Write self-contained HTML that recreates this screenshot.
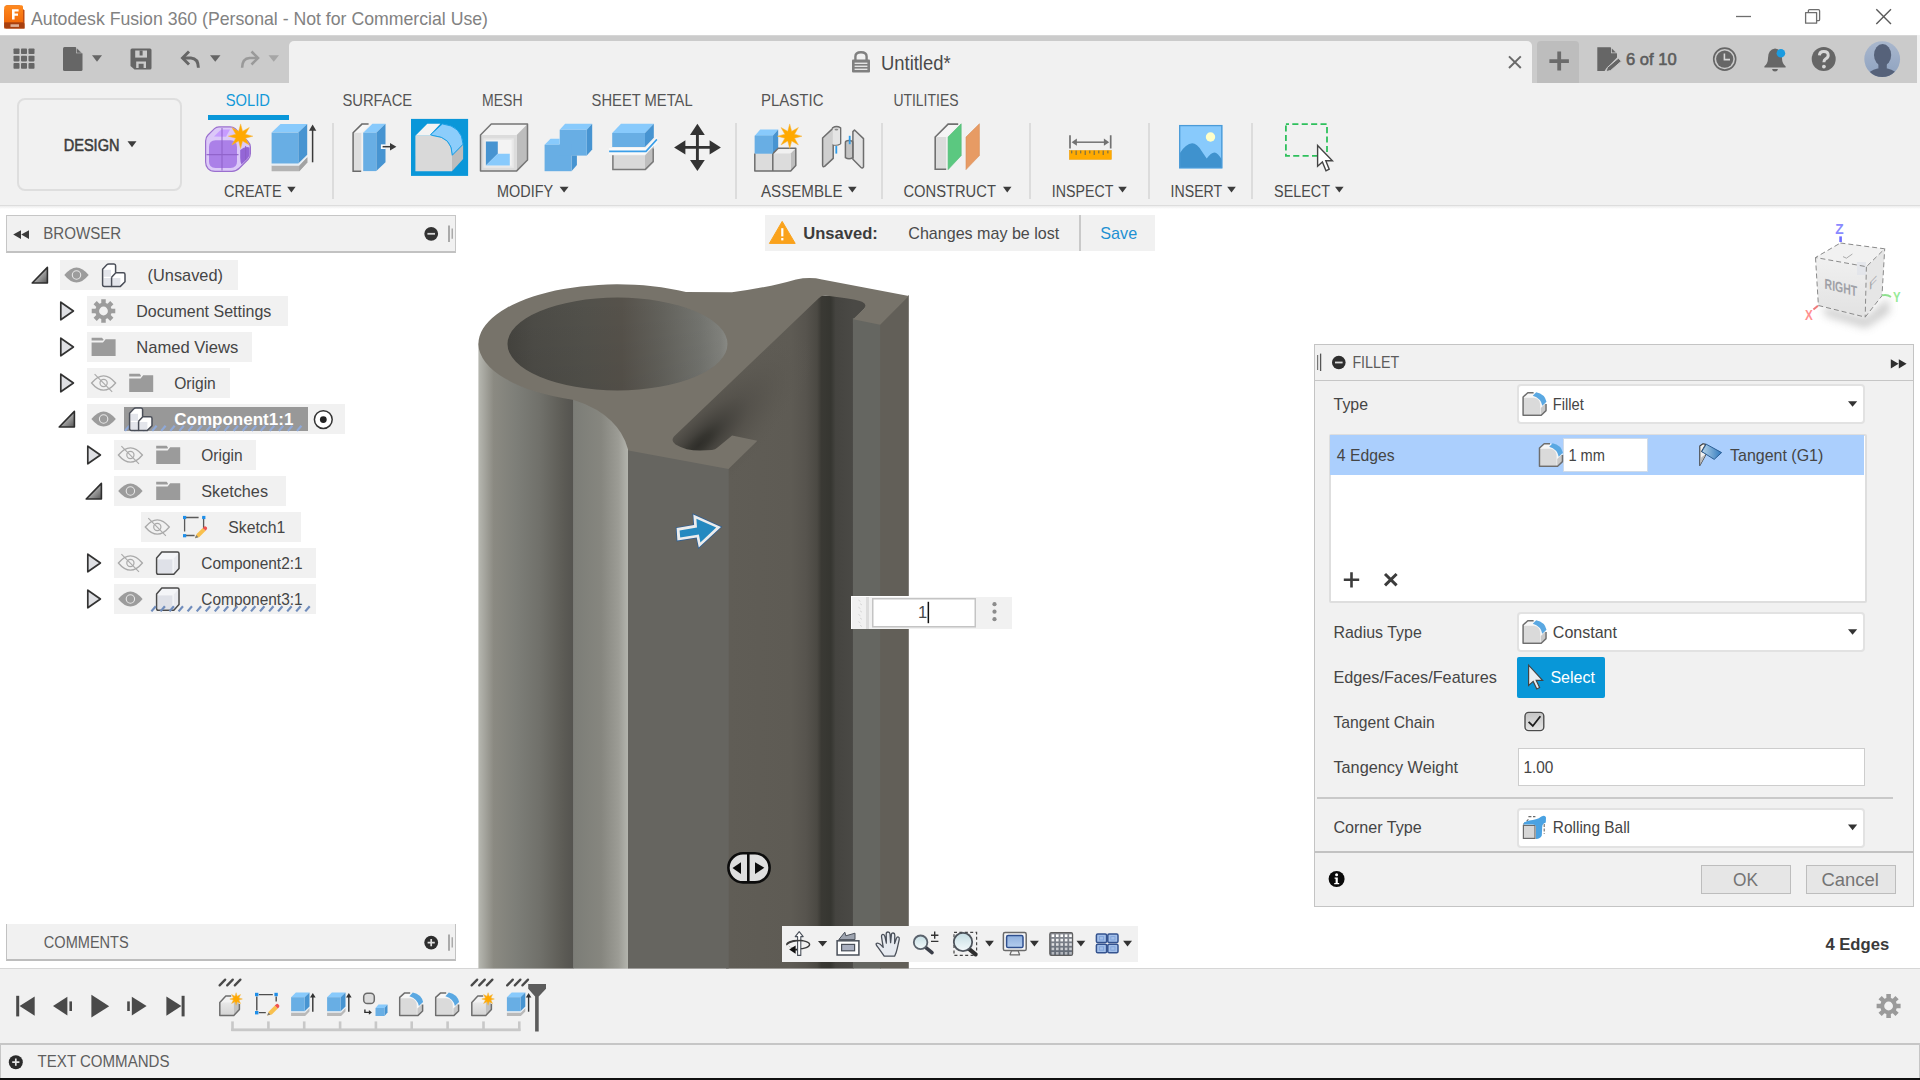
<!DOCTYPE html>
<html lang="en">
<head>
<meta charset="utf-8">
<title>Autodesk Fusion 360 (Personal - Not for Commercial Use)</title>
<style>
html,body{margin:0;padding:0;width:1920px;height:1080px;overflow:hidden;background:#fff;}
body{position:relative;font-family:"Liberation Sans", sans-serif;}
.b{position:absolute;box-sizing:border-box;}
svg.ov{position:absolute;left:0;top:0;width:1920px;height:1080px;overflow:hidden;}
svg.ov text{font-family:"Liberation Sans", sans-serif;white-space:pre;}
</style>
</head>
<body>
<div class="b" style="left:0;top:35px;width:1917px;height:48px;background:#cbcbcb"></div><div class="b" style="left:1917px;top:35px;width:3px;height:48px;background:#f1f1f1"></div><div class="b" style="left:0;top:35px;width:1917px;height:1px;background:#d6d6d6"></div><div class="b" style="left:0;top:83px;width:1920px;height:123px;background:#f1f1f1"></div><div class="b" style="left:289px;top:41px;width:1243px;height:43px;background:#f1f1f1;border-radius:5px 5px 0 0"></div><div class="b" style="left:1537px;top:41px;width:42px;height:42px;background:#bdbdbd;border-radius:4px 4px 0 0"></div><div class="b" style="left:0;top:205px;width:1920px;height:1px;background:#dddddd"></div><div class="b" style="left:0;top:206px;width:1920px;height:3px;background:linear-gradient(#ececec,#ffffff)"></div><div class="b" style="left:17px;top:98px;width:165px;height:93px;border:2px solid #dedede;border-radius:8px;background:#f1f1f1"></div><div class="b" style="left:207.5px;top:115.4px;width:81.5px;height:4.2px;background:#0a97d9"></div><div class="b" style="left:332.0px;top:122.5px;width:2px;height:76px;background:#dcdcdc"></div><div class="b" style="left:735.4px;top:122.5px;width:2px;height:76px;background:#dcdcdc"></div><div class="b" style="left:881.0px;top:122.5px;width:2px;height:76px;background:#dcdcdc"></div><div class="b" style="left:1029.4px;top:122.5px;width:2px;height:76px;background:#dcdcdc"></div><div class="b" style="left:1147.8px;top:122.5px;width:2px;height:76px;background:#dcdcdc"></div><div class="b" style="left:1251.4px;top:122.5px;width:2px;height:76px;background:#dcdcdc"></div><div class="b" style="left:6px;top:215px;width:450px;height:38px;background:#f1f1f1;border:1px solid #c6c6c6;border-bottom:2px solid #c2c2c2"></div><div class="b" style="left:60px;top:260px;width:178px;height:30px;background:#f1f1f1"></div><div class="b" style="left:87px;top:296px;width:201px;height:30px;background:#f1f1f1"></div><div class="b" style="left:87px;top:332px;width:165px;height:30px;background:#f1f1f1"></div><div class="b" style="left:87px;top:368px;width:142.5px;height:30px;background:#f1f1f1"></div><div class="b" style="left:87px;top:404px;width:258px;height:30px;background:#f1f1f1"></div><div class="b" style="left:124.4px;top:407.2px;width:183.2px;height:23.8px;background:#989898"></div><div class="b" style="left:114px;top:440px;width:142.39999999999998px;height:30px;background:#f1f1f1"></div><div class="b" style="left:114px;top:476px;width:172.39999999999998px;height:30px;background:#f1f1f1"></div><div class="b" style="left:141px;top:512px;width:160.39999999999998px;height:30px;background:#f1f1f1"></div><div class="b" style="left:114px;top:548px;width:202.39999999999998px;height:30px;background:#f1f1f1"></div><div class="b" style="left:114px;top:584px;width:202.39999999999998px;height:30px;background:#f1f1f1"></div><div class="b" style="left:6px;top:924px;width:450px;height:37px;background:#f1f1f1;border:1px solid #c2c2c2;border-top:none;border-bottom:2px solid #bdbdbd"></div><div class="b" style="left:765px;top:215px;width:390px;height:36px;background:#f1f1f1"></div><div class="b" style="left:1079.2px;top:215px;width:2px;height:36px;background:#c9c9c9"></div><div class="b" style="left:1314px;top:344px;width:600px;height:563px;background:#f1f1f1;border:1px solid #c4c4c4"></div><div class="b" style="left:1315px;top:379.6px;width:598px;height:1.4px;background:#c6c6c6"></div><div class="b" style="left:1517px;top:384px;width:348px;height:40.39999999999998px;background:#fff;border:2px solid #e2e2e2;border-radius:4px"></div><div class="b" style="left:1328.6px;top:433.6px;width:538px;height:169px;background:#fff;border:2px solid #dedede;border-radius:2px"></div><div class="b" style="left:1330px;top:434.6px;width:1533.6px;height:40px;background:#abcffd;width:533.6px"></div><div class="b" style="left:1563.4px;top:438px;width:84.6px;height:34px;background:#fff;border:1px solid #d0dbe8"></div><div class="b" style="left:1517px;top:612.4px;width:348px;height:39.60000000000002px;background:#fff;border:2px solid #e2e2e2;border-radius:4px"></div><div class="b" style="left:1517px;top:657px;width:87.6px;height:40.6px;background:#0897d8;border-radius:2px"></div><div class="b" style="left:1518px;top:748px;width:346.6px;height:38.4px;background:#fff;border:1.5px solid #cdcdcd"></div><div class="b" style="left:1317px;top:797.4px;width:576px;height:1.4px;background:#c9c9c9"></div><div class="b" style="left:1517px;top:807.6px;width:348px;height:40.0px;background:#fff;border:2px solid #e2e2e2;border-radius:4px"></div><div class="b" style="left:1315px;top:851.4px;width:598px;height:1.4px;background:#c2c2c2"></div><div class="b" style="left:1701px;top:865px;width:90px;height:28.6px;background:#e6e6e6;border:1.4px solid #bdbdbd"></div><div class="b" style="left:1806px;top:865px;width:90px;height:28.6px;background:#e6e6e6;border:1.4px solid #bdbdbd"></div><div class="b" style="left:0;top:968.4px;width:1920px;height:112px;background:#f1f1f1;border-top:1.6px solid #d6d6d6"></div><div class="b" style="left:0;top:1043px;width:1920px;height:1.6px;background:#c6c6c6"></div><div class="b" style="left:0;top:1044px;width:1.4px;height:34px;background:#c6c6c6"></div><div class="b" style="left:1918.6px;top:1044px;width:1.4px;height:34px;background:#c6c6c6"></div><div class="b" style="left:0;top:1077.6px;width:1920px;height:2.4px;background:#111"></div>
<svg class="ov" width="1920" height="1080" viewBox="0 0 1920 1080">
<defs><linearGradient id="flogo" x1="0" y1="0" x2="0" y2="1"><stop offset="0" stop-color="#ff8a1f"/><stop offset="1" stop-color="#f26a0a"/></linearGradient></defs>
<path d="M6.5 5.2H19.5L24.5 10.5V28.6H4.2V10.2Z" fill="#c14c10"/>
<path d="M6.8 5.2H21.5Q23 5.2 23 6.8V22.5H4.2V7.8Q4.2 5.2 6.8 5.2Z" fill="url(#flogo)"/>
<path d="M4.2 22.5H23L24.5 23.5V28.6H5.8L4.2 27Z" fill="#a8400f"/>
<path d="M12 9.2H18.6V11.4H14.6V13.6H18V15.8H14.6V19.6H12Z" fill="#fff"/>
<rect x="10.5" y="24.3" width="8.5" height="2.6" fill="#e8c3ae" opacity=".85"/>
<text x="31.0" y="25.0" font-size="18.6" fill="#828282" textLength="457.0" lengthAdjust="spacingAndGlyphs">Autodesk Fusion 360 (Personal - Not for Commercial Use)</text>
<path d="M1736 16.5H1751" stroke="#6e6e6e" stroke-width="1.3" fill="none"/>
<path d="M1805.6 12.6H1816.6V23.2H1805.6Z" stroke="#6e6e6e" stroke-width="1.3" fill="none" stroke-linejoin="round"/>
<path d="M1808.4 12.6V10.6Q1808.4 9.6 1809.6 9.6H1818.4Q1819.6 9.6 1819.6 10.8V19.4Q1819.6 20.6 1818.4 20.6H1816.6" stroke="#6e6e6e" stroke-width="1.3" fill="none"/>
<path d="M1876.3 9.3L1891 24M1891 9.3L1876.3 24" stroke="#5a5a5a" stroke-width="1.4" fill="none"/>
<rect x="13.5" y="48.5" width="6" height="5.6" rx="0.8" fill="#666666"/>
<rect x="13.5" y="55.8" width="6" height="5.6" rx="0.8" fill="#666666"/>
<rect x="13.5" y="63.1" width="6" height="5.6" rx="0.8" fill="#666666"/>
<rect x="21.0" y="48.5" width="6" height="5.6" rx="0.8" fill="#666666"/>
<rect x="21.0" y="55.8" width="6" height="5.6" rx="0.8" fill="#666666"/>
<rect x="21.0" y="63.1" width="6" height="5.6" rx="0.8" fill="#666666"/>
<rect x="28.5" y="48.5" width="6" height="5.6" rx="0.8" fill="#666666"/>
<rect x="28.5" y="55.8" width="6" height="5.6" rx="0.8" fill="#666666"/>
<rect x="28.5" y="63.1" width="6" height="5.6" rx="0.8" fill="#666666"/>
<path d="M64.5 47H75.5L82.5 53.5V69.5Q82.5 71 81 71H64.5Q63 71 63 69.5V48.5Q63 47 64.5 47Z" fill="#666666"/>
<path d="M76 47V53.3H82.5Z" fill="#cbcbcb"/><path d="M76.6 48.2L81.3 52.7H76.6Z" fill="#666"/>
<path d="M92 55.2H102L97.0 61.8Z" fill="#666666"/>
<path d="M132 48.5H150Q151.5 48.5 151.5 50V68Q151.5 69.5 150 69.5H134.5L130.5 66V50Q130.5 48.5 132 48.5Z" fill="#666666"/>
<path d="M135.2 50.5H147V57.6H135.2Z" fill="#cbcbcb"/><rect x="139.6" y="50.5" width="3" height="5" fill="#666"/>
<path d="M136.2 68V61.6H146V68H143.6V63.8H138.6V68Z" fill="#cbcbcb"/>
<path d="M189 51.5L182.5 58L189 64.5" stroke="#666666" stroke-width="2.9" fill="none" stroke-linejoin="miter"/>
<path d="M183.5 58H191Q198.2 58.4 198.4 67.8" stroke="#666666" stroke-width="2.9" fill="none"/>
<path d="M210 55.2H220.5L215.25 61.8Z" fill="#666666"/>
<path d="M251.5 51.5L258 58L251.5 64.5" stroke="#9a9a9a" stroke-width="2.6" fill="none"/>
<path d="M257 58H249.5Q242.3 58.4 242.1 67.8" stroke="#9a9a9a" stroke-width="2.6" fill="none"/>
<path d="M268.5 55.2H279L273.75 61.8Z" fill="#a6a6a6"/>
<path d="M855.4 60V56.6Q855.4 52.3 861 52.3Q866.6 52.3 866.6 56.6V60" stroke="#808080" stroke-width="2.4" fill="none"/>
<rect x="852" y="59.6" width="18" height="13" rx="1" fill="#808080"/>
<rect x="854.6" y="62.6" width="12.8" height="1.4" fill="#e4e4e4"/>
<rect x="854.6" y="65.6" width="12.8" height="1.4" fill="#e4e4e4"/>
<rect x="854.6" y="68.6" width="12.8" height="1.4" fill="#e4e4e4"/>
<text x="881.0" y="69.7" font-size="19.5" fill="#4a4a4a" textLength="69.6" lengthAdjust="spacingAndGlyphs">Untitled*</text>
<path d="M1509 56.4L1520.8 68M1520.8 56.4L1509 68" stroke="#6a6a6a" stroke-width="2" fill="none"/>
<path d="M1549.4 61.1H1568.9M1559.2 51.6V70.6" stroke="#6b6b6b" stroke-width="3.8" fill="none"/>
<path d="M1597.3 47.2H1610.5L1617 53.6V57.6L1606 68.8L1604.6 71H1597.3Z" fill="#666666"/>
<path d="M1611 47.2V53.2H1617Z" fill="#cbcbcb"/><path d="M1611.8 48.6L1615.8 52.6H1611.8Z" fill="#666"/>
<path d="M1618.4 58.2L1621.4 61.2L1610.6 70.6L1606 71.6L1607.4 67.4Z" fill="#666666" stroke="#cbcbcb" stroke-width="1"/>
<text x="1626.0" y="64.9" font-size="16.8" fill="#5c5c5c" textLength="50.6" lengthAdjust="spacingAndGlyphs" stroke="#5c5c5c" stroke-width="0.6">6 of 10</text>
<circle cx="1724.7" cy="59.1" r="11" fill="none" stroke="#666666" stroke-width="1.6"/>
<circle cx="1724.7" cy="59.1" r="8.6" fill="#666666"/>
<path d="M1724.4 53.4V59.6H1730" stroke="#d6d6d6" stroke-width="1.6" fill="none"/>
<path d="M1775 48.5Q1782 49.5 1782 58Q1782 63.5 1785.6 66.2V67.4H1764.4V66.2Q1768 63.5 1768 58Q1768 49.5 1775 48.5Z" fill="#666666"/>
<path d="M1772 69H1778Q1777.6 71.6 1775 71.6Q1772.4 71.6 1772 69Z" fill="#666666"/>
<circle cx="1780.9" cy="53.2" r="4.3" fill="#1a9be0"/>
<circle cx="1823.7" cy="59.1" r="12" fill="#666666"/>
<path d="M1819.4 55.4Q1819.6 51.4 1823.8 51.4Q1828.2 51.4 1828.2 55.2Q1828.2 57.4 1825.8 58.8Q1823.9 60 1823.9 62.2" stroke="#d8d8d8" stroke-width="3" fill="none"/>
<circle cx="1823.9" cy="66.6" r="1.9" fill="#d8d8d8"/>
<defs><linearGradient id="avbg" x1="0" y1="0" x2="0" y2="1"><stop offset="0" stop-color="#a9b7cd"/><stop offset="1" stop-color="#8ea2c0"/></linearGradient><clipPath id="avc"><circle cx="1882.2" cy="59.1" r="17.9"/></clipPath></defs>
<circle cx="1882.2" cy="59.1" r="17.9" fill="url(#avbg)"/>
<g clip-path="url(#avc)"><ellipse cx="1882.6" cy="55" rx="8.6" ry="11" fill="#56627a"/><path d="M1878.4 62H1886.8V70H1878.4Z" fill="#56627a"/><path d="M1866 80Q1867 70.5 1877.5 68.5H1887.5Q1898 70.5 1899 80Z" fill="#56627a"/></g><text x="63.7" y="150.5" font-size="17" fill="#3c3c3c" textLength="55.8" lengthAdjust="spacingAndGlyphs" stroke="#3c3c3c" stroke-width="0.55">DESIGN</text>
<path d="M127.5 141.2H136.5L132.0 147.2Z" fill="#3c3c3c"/>
<text x="225.8" y="105.8" font-size="17" fill="#1399d8" textLength="44.2" lengthAdjust="spacingAndGlyphs">SOLID</text>
<text x="342.4" y="105.8" font-size="17" fill="#555555" textLength="69.8" lengthAdjust="spacingAndGlyphs">SURFACE</text>
<text x="482.0" y="105.8" font-size="17" fill="#555555" textLength="40.6" lengthAdjust="spacingAndGlyphs">MESH</text>
<text x="591.6" y="105.8" font-size="17" fill="#555555" textLength="101.0" lengthAdjust="spacingAndGlyphs">SHEET METAL</text>
<text x="761.0" y="105.8" font-size="17" fill="#555555" textLength="62.5" lengthAdjust="spacingAndGlyphs">PLASTIC</text>
<text x="893.4" y="105.8" font-size="17" fill="#555555" textLength="65.1" lengthAdjust="spacingAndGlyphs">UTILITIES</text>
<text x="224.0" y="197.0" font-size="16.8" fill="#4a4a4a" textLength="57.6" lengthAdjust="spacingAndGlyphs">CREATE</text>
<path d="M287.2 186.8H295.6L291.4 192.6Z" fill="#3c3c3c"/>
<text x="497.0" y="197.0" font-size="16.8" fill="#4a4a4a" textLength="56.1" lengthAdjust="spacingAndGlyphs">MODIFY</text>
<path d="M559.6 186.8H568.6L564.1 192.6Z" fill="#3c3c3c"/>
<text x="761.0" y="197.0" font-size="16.8" fill="#4a4a4a" textLength="81.5" lengthAdjust="spacingAndGlyphs">ASSEMBLE</text>
<path d="M848 186.8H856.6L852.3 192.6Z" fill="#3c3c3c"/>
<text x="903.4" y="197.0" font-size="16.8" fill="#4a4a4a" textLength="92.5" lengthAdjust="spacingAndGlyphs">CONSTRUCT</text>
<path d="M1003 186.8H1011.5L1007.25 192.6Z" fill="#3c3c3c"/>
<text x="1051.8" y="197.0" font-size="16.8" fill="#4a4a4a" textLength="61.5" lengthAdjust="spacingAndGlyphs">INSPECT</text>
<path d="M1118.2 186.8H1126.8L1122.5 192.6Z" fill="#3c3c3c"/>
<text x="1170.6" y="197.0" font-size="16.8" fill="#4a4a4a" textLength="51.6" lengthAdjust="spacingAndGlyphs">INSERT</text>
<path d="M1227.2 186.8H1235.8L1231.5 192.6Z" fill="#3c3c3c"/>
<text x="1274.1" y="197.0" font-size="16.8" fill="#4a4a4a" textLength="55.9" lengthAdjust="spacingAndGlyphs">SELECT</text>
<path d="M1335 186.8H1343.6L1339.3 192.6Z" fill="#3c3c3c"/>
<path d="M205.6 141Q205.6 137.5 208 135L214.5 128.6Q216.3 126.9 219 126.9H230Q233 126.9 235 128.5L247.5 141Q250.4 144 250.4 147V153.5Q250.4 157 248 159.5L239.5 168Q236.4 171.3 232 171.3H215Q210.5 171.3 208 168.6Q205.6 166 205.6 162Z" fill="#dcc9f8" stroke="#9a6fce" stroke-width="1.2"/><path d="M209 147Q209 140.2 215.5 140.2H230.5Q237 140.2 237 147V161.5Q237 168 230.5 168H215.5Q209 168 209 161.5Z" fill="#ab80e8"/><path d="M214 136.5L219.5 131Q221 129.6 223 129.6H230L226 136.8Z" fill="#c79cff"/><path d="M240.2 150Q245 146 249.6 147.5V154Q249.6 156.5 247.6 158.6L241.5 164.6Q240.2 162 240.2 158Z" fill="#9466d6"/><path d="M222 128V170.6M206.5 154.6H238.5M245.6 146V160" stroke="#8c5fc6" stroke-width="1.1" fill="none" opacity=".85"/><path d="M240.6 123.9L242.6 131.3L249.3 127.5L245.5 134.2L252.9 136.2L245.5 138.2L249.3 144.9L242.6 141.1L240.6 148.5L238.6 141.1L231.9 144.9L235.7 138.2L228.3 136.2L235.7 134.2L231.9 127.5L238.6 131.3Z" fill="#ffa900" stroke="#f5b84a" stroke-width="0.5"/><path d="M271.6 165.6L299.4 165.6L307.3 157.2L307.3 162.6L299.4 171.2L271.6 171.2Z" fill="#b3b3b3"/><path d="M299.2 165.6L307.3 157.2L307.3 162.6L299.2 171.2Z" fill="#a2a2a2"/><path d="M271.6 163.4L298.4 163.4L307.2 154.8L307.2 157.0L299.2 165.6L271.6 165.6Z" fill="#e6eef5"/><path d="M271.6 132.6L280.5 123.9L307.2 123.9L298.3 132.6Z" fill="#88cafc"/><path d="M298.3 132.6L307.2 123.9L307.2 154.8L298.3 163.5Z" fill="#4794d1"/><path d="M271.6 132.6L298.3 132.6L298.3 163.5L271.6 163.5Z" fill="#68aee4"/><path d="M312.6 127V162.3" stroke="#3a3a3a" stroke-width="1.5"/><path d="M309 130.8L312.6 124.4L316.3 130.8Z" fill="#3a3a3a"/><path d="M353.1 132.8L361.9 124.1L370.0 124.1L361.3 132.8Z" fill="#f6f6f6"/><path d="M353.1 132.8L361.3 132.8L361.3 171.2L353.1 171.2Z" fill="#dedede"/><path d="M368.6 124.1H361.9L353.1 132.8V171.2H361.2" stroke="#6a6a6a" stroke-width="1.5" fill="none"/><path d="M363.2 132.7L372.4 123.8L385.5 123.8L376.3 132.7Z" fill="#88cafc"/><path d="M376.3 132.7L385.5 123.8L385.5 162.2L376.3 171.1Z" fill="#4794d1"/><path d="M363.2 132.7L376.3 132.7L376.3 171.1L363.2 171.1Z" fill="#68aee4"/><rect x="380.9" y="144.4" width="4.9" height="4.6" fill="#fafafa"/><path d="M382.6 146.7H391" stroke="#3a3a3a" stroke-width="1.5"/><path d="M390 143L396.4 146.7L390 150.5Z" fill="#3a3a3a"/><rect x="411" y="118.9" width="57.1" height="57" fill="#0a97d9"/><path d="M415.4 135.7L427.3 123.8L440.4 123.8L430.2 134.8L433.0 135.7Z" fill="#f3f3f3"/><path d="M415.4 135.7H433Q452 137 452 155.6V171.2H415.4Z" fill="#d9d9d9"/><path d="M452.0 155.6L463.1 144.6L463.1 159.0L452.0 171.2Z" fill="#bdbdbd"/><path d="M430.6 134.6L442.4 123.9Q462 126 463.1 144.2L452.3 155.2Q452 137 433 135.6Z" fill="#8ccdfb" stroke="#1a9fe6" stroke-width="1"/><path d="M480.5 135.0L491.3 123.9L527.5 123.9L516.7 135.0Z" fill="#f3f3f3"/><path d="M516.7 135.0L527.5 123.9L527.5 160.0L516.7 170.9Z" fill="#bdbdbd"/><path d="M480.5 135.0L516.7 135.0L516.7 170.9L480.5 170.9Z" fill="#dcdcdc"/><rect x="483.4" y="138.4" width="30.4" height="29.4" fill="#e9e9e9"/><rect x="485.8" y="140" width="25.8" height="25.6" fill="#f3f3f3"/><path d="M485.9 141.6L497.8 141.6L497.8 153.8L485.9 165.4Z" fill="#4794d1"/><path d="M485.9 165.4L497.8 153.8L509.8 153.8L509.8 165.4Z" fill="#88cafc"/><path d="M480.5 135L491.3 123.9H527.5V160L516.7 170.9H480.5Z" fill="none" stroke="#767676" stroke-width="1.5" stroke-linejoin="round"/><path d="M559.7 129.8L565.1 123.8L592.2 123.8L586.8 129.8Z" fill="#88cafc"/><path d="M586.8 129.8L592.2 123.8L592.2 149.6L586.8 155.6Z" fill="#4794d1"/><path d="M559.7 129.8L586.8 129.8L586.8 155.6L559.7 155.6Z" fill="#68aee4"/><path d="M544.6 144.7L550.5 138.7L559.7 138.7L559.7 144.7Z" fill="#88cafc"/><path d="M571.5 155.6L576.9 155.6L576.9 165.1L571.5 171.2Z" fill="#4794d1"/><path d="M544.6 144.7L571.5 144.7L571.5 171.2L544.6 171.2Z" fill="#68aee4"/><path d="M559.7 144.0L571.6 144.0L571.6 155.6L559.7 155.6Z" fill="#68aee4"/><path d="M612.2 133.1L621.0 123.8L653.8 123.8L645.0 133.1Z" fill="#88cafc"/><path d="M645.0 133.1L653.8 123.8L653.8 137.7L645.0 147.0Z" fill="#4794d1"/><path d="M612.2 133.1L645.0 133.1L645.0 147.0L612.2 147.0Z" fill="#68aee4"/><path d="M609.0 148.0L646.0 148.0L657.0 136.4L657.6 142.5L646.6 154.6L609.0 154.6Z" fill="#fafafa"/><path d="M645.0 155.2L653.8 146.0L653.8 161.7L645.0 169.8Z" fill="#bebebe"/><path d="M612.2 155.2L645.0 155.2L645.0 169.8L612.2 169.8Z" fill="#d9d9d9"/><path d="M612.9 155.2V169.4H645.4L653.2 161.6V148.4" fill="none" stroke="#7a7a7a" stroke-width="1.5"/><path d="M609.1 151.4H646L656.9 139.4" fill="none" stroke="#3b9fe9" stroke-width="1.6"/><path d="M697.4 132V163M682 147.4H713" stroke="#333333" stroke-width="2.9"/><path d="M690.0 135.0L697.4 123.8L704.8 135.0Z" fill="#333333"/><path d="M690.0 160.0L697.4 171.0L704.8 160.0Z" fill="#333333"/><path d="M685.4 140.2L674.1 147.4L685.4 154.6Z" fill="#333333"/><path d="M709.6 140.2L720.9 147.4L709.6 154.6Z" fill="#333333"/><path d="M754.8 135.7L760.2 129.6L778.2 129.6L772.8 135.7Z" fill="#88cafc"/><path d="M772.8 135.7L778.2 129.6L778.2 147.5L772.8 153.6Z" fill="#4794d1"/><path d="M754.8 135.7L772.8 135.7L772.8 153.6L754.8 153.6Z" fill="#68aee4"/><path d="M772.8 153.6L778.2 148.2L795.8 148.2L790.7 153.6Z" fill="#f1f1f1"/><path d="M790.7 153.6L795.8 148.2L795.8 165.4L790.7 170.9Z" fill="#bdbdbd"/><path d="M754.8 153.6L790.7 153.6L790.7 170.9L754.8 170.9Z" fill="#dcdcdc"/><path d="M754.8 153.6V170.9H790.7L795.8 165.4V148.2H778.2L772.8 153.6V170.9" fill="none" stroke="#6e6e6e" stroke-width="1.5" stroke-linejoin="round"/><path d="M754.8 135.7L772.8 135.7L772.8 153.6L754.8 153.6Z" fill="#68aee4"/><path d="M789.7 123.9L791.7 131.3L798.4 127.5L794.6 134.2L802.0 136.2L794.6 138.2L798.4 144.9L791.7 141.1L789.7 148.5L787.7 141.1L781.0 144.9L784.8 138.2L777.4 136.2L784.8 134.2L781.0 127.5L787.7 131.3Z" fill="#ffa900" stroke="#f5b84a" stroke-width="0.5"/><path d="M822.6 138L832.6 128.6V127.8Q836.5 125.4 840.6 127.8V143.6Q837 146 833.2 144.6V158.4L824.6 166.4Q822.6 167.4 822.6 165Z" fill="#cfcfcf" stroke="#6e6e6e" stroke-width="1.5" stroke-linejoin="round"/><path d="M832.8 128.6V144.4Q837 145.6 840 143.4V128.6Z" fill="#e4e4e4"/><ellipse cx="836.4" cy="129.6" rx="1.9" ry="0.9" fill="#8a8a8a"/><path d="M836.3 146V153.6" stroke="#2e9be8" stroke-width="1.8"/><path d="M852.9 131.6L854.5 130L863.5 138.6V166.8Q862.5 168.8 860.8 167.2L852.9 159.2Z" fill="#e3e3e3" stroke="#6e6e6e" stroke-width="1.5" stroke-linejoin="round"/><path d="M845.4 142.4Q845.4 140.4 849 140.4Q852.8 140.4 852.8 142.4V157.6Q849 160 845.4 157.6Z" fill="#c4c4c4" stroke="#6e6e6e" stroke-width="1.5"/><path d="M849.7 135.8V144.2" stroke="#2e9be8" stroke-width="1.8"/><path d="M935.2 137.0L948.1 124.1L959.0 124.1L946.1 137.0Z" fill="#f5f5f5"/><path d="M935.2 137.0L946.1 137.0L946.1 169.2L935.2 169.2Z" fill="#dcdcdc"/><path d="M958.2 124.1H948.1L935.2 137V169.2H946.2" stroke="#707070" stroke-width="1.6" fill="none"/><path d="M948.1 137.0L961.2 123.8L961.2 155.6L948.1 169.6Z" fill="#5bc880" stroke="#4cb870" stroke-width="0.6"/><path d="M966.0 137.0L979.4 123.8L979.4 155.6L966.0 169.6Z" fill="#e79b64" stroke="#d98d58" stroke-width="0.6"/><path d="M1070 135.3V148.5M1110.7 135.3V148.5" stroke="#727272" stroke-width="1.7"/><path d="M1075 142.2H1106" stroke="#727272" stroke-width="1.5"/><path d="M1071.6 142.2L1076.9 138.6L1076.9 145.8Z" fill="#727272"/><path d="M1109.2 142.2L1103.9 138.6L1103.9 145.8Z" fill="#727272"/><rect x="1069.4" y="150.5" width="41.9" height="8.8" fill="#ffaa00" stroke="#ee9e08" stroke-width="0.6"/><rect x="1071.0" y="150.6" width="1.3" height="2.8" fill="#86743f"/><rect x="1075.5" y="150.6" width="1.3" height="4.4" fill="#86743f"/><rect x="1080.0" y="150.6" width="1.3" height="2.8" fill="#86743f"/><rect x="1084.6" y="150.6" width="1.3" height="4.4" fill="#86743f"/><rect x="1089.1" y="150.6" width="1.3" height="2.8" fill="#86743f"/><rect x="1093.6" y="150.6" width="1.3" height="4.4" fill="#86743f"/><rect x="1098.1" y="150.6" width="1.3" height="2.8" fill="#86743f"/><rect x="1102.6" y="150.6" width="1.3" height="4.4" fill="#86743f"/><rect x="1107.2" y="150.6" width="1.3" height="2.8" fill="#86743f"/><rect x="1179.1" y="125" width="43.3" height="43.4" fill="#88cafc"/><path d="M1179.6 153.4Q1186 143.4 1192.2 143.2Q1197 143.2 1201.6 151L1206.7 158.6Q1211 152.4 1214.4 152.4Q1218 152.6 1222 160V168H1179.6Z" fill="#3f92ce"/><circle cx="1210.5" cy="137" r="4.7" fill="#ffffc8"/><rect x="1179.7" y="125.6" width="42.1" height="42.2" fill="none" stroke="#4b9bd8" stroke-width="1.3"/><rect x="1285.9" y="124.2" width="41.1" height="31.6" fill="none" stroke="#2ec05c" stroke-width="1.8" stroke-dasharray="6.1 3.3" stroke-dashoffset="3"/><path d="M1317.6 145.4V166.2L1322.4 162L1326 170.8L1329.2 169.2L1325.8 160.8H1332.4Z" fill="#fff" stroke="#444" stroke-width="1.4" stroke-linejoin="miter"/><path d="M21 230.2V239L13.2 234.6ZM29 230.2V239L21.2 234.6Z" fill="#3a3a3a"/>
<text x="43.2" y="238.8" font-size="16.8" fill="#5e5e5e" textLength="78.1" lengthAdjust="spacingAndGlyphs">BROWSER</text>
<circle cx="431.2" cy="233.8" r="6.9" fill="#333"/><rect x="427.4" y="232.9" width="7.6" height="1.8" fill="#d8d8d8"/>
<path d="M449 225.6V242" stroke="#999" stroke-width="1.6"/><path d="M452.2 228.4V238.8" stroke="#999" stroke-width="1.2"/>
<defs><linearGradient id="tg31275" x1="0" y1="0" x2="1" y2="1"><stop offset="0.3" stop-color="#c8c8c8"/><stop offset="1" stop-color="#555"/></linearGradient></defs><path d="M32.2 283H47.4V267.4Z" fill="url(#tg31275)" stroke="#2e2e2e" stroke-width="1.6" stroke-linejoin="round"/>
<path d="M64.3 275Q70.5 267.4 76.5 267.4Q82.5 267.4 88.7 275Q82.5 282.6 76.5 282.6Q70.5 282.6 64.3 275Z" fill="#9c9c9c"/><circle cx="76.5" cy="275" r="4.2" fill="none" stroke="#e6e6e6" stroke-width="1.1"/>
<path d="M102.6 269.0L106.8 264.0H115.6V272.79999999999995L111.6 277.0V286.4H102.6Z" fill="#ffffff"/><path d="M103.4 269.79999999999995H111V285.79999999999995H103.4Z" fill="#e3e5eb"/><path d="M103.4 277.4H111" stroke="#fff" stroke-width="1.2"/><path d="M111.6 277.2L115.8 272.79999999999995H125V281.79999999999995L121.2 286.4H111.6Z" fill="#ffffff"/><path d="M112.4 278.0H120.4V285.79999999999995H112.4Z" fill="#e3e5eb"/><path d="M111.6 286.4H104.4Q102.6 286.4 102.6 284.4V269.2L106.8 264.79999999999995Q107.6 264.0 108.8 264.0H114Q115.6 264.0 115.6 265.79999999999995V272.79999999999995" fill="none" stroke="#4a4e58" stroke-width="1.5"/><path d="M111.6 277.2V286.4H120.4L125 281.79999999999995V274.4Q125 272.79999999999995 123.4 272.79999999999995H115.8L111.6 277.2" fill="none" stroke="#4a4e58" stroke-width="1.5" stroke-linejoin="round"/>
<text x="147.6" y="280.8" font-size="16.6" fill="#454545" textLength="75.4" lengthAdjust="spacingAndGlyphs">(Unsaved)</text>
<path d="M60.8 302.2L73.39999999999999 311L60.8 319.8Z" fill="#dfe0e4" stroke="#333" stroke-width="1.7" stroke-linejoin="round"/>
<path d="M101.29 303.00L101.23 299.22L105.77 299.22L105.71 303.00L107.59 303.78L110.23 301.06L113.44 304.27L110.72 306.91L111.50 308.79L115.28 308.73L115.28 313.27L111.50 313.21L110.72 315.09L113.44 317.73L110.23 320.94L107.59 318.22L105.71 319.00L105.77 322.78L101.23 322.78L101.29 319.00L99.41 318.22L96.77 320.94L93.56 317.73L96.28 315.09L95.50 313.21L91.72 313.27L91.72 308.73L95.50 308.79L96.28 306.91L93.56 304.27L96.77 301.06L99.41 303.78ZM107.9 311A4.4 4.4 0 1 0 99.1 311A4.4 4.4 0 1 0 107.9 311Z" fill="#9c9c9c" fill-rule="evenodd"/>
<text x="136.2" y="316.9" font-size="16.6" fill="#454545" textLength="135.1" lengthAdjust="spacingAndGlyphs">Document Settings</text>
<path d="M60.8 338.2L73.39999999999999 347L60.8 355.8Z" fill="#dfe0e4" stroke="#333" stroke-width="1.7" stroke-linejoin="round"/>
<path d="M91.6 337.8H102.0L103.19999999999999 339.2V340.40000000000003H91.6Z" fill="#9b9b9b"/><path d="M91.6 342.40000000000003H103.0L105.6 339.2H115.6V356.0H91.6Z" fill="#9b9b9b"/>
<text x="136.2" y="352.9" font-size="16.6" fill="#454545" textLength="102.1" lengthAdjust="spacingAndGlyphs">Named Views</text>
<path d="M60.8 374.2L73.39999999999999 383L60.8 391.8Z" fill="#dfe0e4" stroke="#333" stroke-width="1.7" stroke-linejoin="round"/>
<path d="M91.6 383Q97.6 375.8 103.6 375.8Q109.6 375.8 115.6 383Q109.6 390.2 103.6 390.2Q97.6 390.2 91.6 383Z" fill="none" stroke="#a9a9a9" stroke-width="1.3"/><circle cx="103.6" cy="383" r="3.6" fill="none" stroke="#a9a9a9" stroke-width="1.2"/><path d="M94.6 374.2L112.19999999999999 391.8" stroke="#a9a9a9" stroke-width="1.1"/>
<path d="M129.2 373.8H139.6L140.79999999999998 375.2V376.40000000000003H129.2Z" fill="#9b9b9b"/><path d="M129.2 378.40000000000003H140.6L143.2 375.2H153.2V392.0H129.2Z" fill="#9b9b9b"/>
<text x="174.2" y="388.9" font-size="16.6" fill="#454545" textLength="41.6" lengthAdjust="spacingAndGlyphs">Origin</text>
<defs><linearGradient id="tg58419" x1="0" y1="0" x2="1" y2="1"><stop offset="0.3" stop-color="#c8c8c8"/><stop offset="1" stop-color="#555"/></linearGradient></defs><path d="M59.2 427H74.4V411.4Z" fill="url(#tg58419)" stroke="#2e2e2e" stroke-width="1.6" stroke-linejoin="round"/>
<path d="M91.39999999999999 419Q97.6 411.4 103.6 411.4Q109.6 411.4 115.8 419Q109.6 426.6 103.6 426.6Q97.6 426.6 91.39999999999999 419Z" fill="#9c9c9c"/><circle cx="103.6" cy="419" r="4.2" fill="none" stroke="#e6e6e6" stroke-width="1.1"/>
<path d="M125.0 430.90000000000003L129.4 425.7" stroke="#8fa9d8" stroke-width="2.2"/><path d="M134.1 430.90000000000003L138.5 425.7" stroke="#8fa9d8" stroke-width="2.2"/><path d="M143.1 430.90000000000003L147.5 425.7" stroke="#8fa9d8" stroke-width="2.2"/><path d="M152.2 430.90000000000003L156.6 425.7" stroke="#8fa9d8" stroke-width="2.2"/><path d="M161.2 430.90000000000003L165.6 425.7" stroke="#8fa9d8" stroke-width="2.2"/><path d="M170.3 430.90000000000003L174.7 425.7" stroke="#8fa9d8" stroke-width="2.2"/><path d="M179.3 430.90000000000003L183.7 425.7" stroke="#8fa9d8" stroke-width="2.2"/><path d="M188.4 430.90000000000003L192.8 425.7" stroke="#8fa9d8" stroke-width="2.2"/><path d="M197.4 430.90000000000003L201.8 425.7" stroke="#8fa9d8" stroke-width="2.2"/><path d="M206.5 430.90000000000003L210.9 425.7" stroke="#8fa9d8" stroke-width="2.2"/><path d="M215.5 430.90000000000003L219.9 425.7" stroke="#8fa9d8" stroke-width="2.2"/><path d="M224.6 430.90000000000003L229.0 425.7" stroke="#8fa9d8" stroke-width="2.2"/><path d="M233.6 430.90000000000003L238.0 425.7" stroke="#8fa9d8" stroke-width="2.2"/><path d="M242.7 430.90000000000003L247.1 425.7" stroke="#8fa9d8" stroke-width="2.2"/><path d="M251.7 430.90000000000003L256.1 425.7" stroke="#8fa9d8" stroke-width="2.2"/><path d="M260.8 430.90000000000003L265.2 425.7" stroke="#8fa9d8" stroke-width="2.2"/><path d="M269.8 430.90000000000003L274.2 425.7" stroke="#8fa9d8" stroke-width="2.2"/><path d="M278.9 430.90000000000003L283.3 425.7" stroke="#8fa9d8" stroke-width="2.2"/><path d="M287.9 430.90000000000003L292.3 425.7" stroke="#8fa9d8" stroke-width="2.2"/><path d="M297.0 430.90000000000003L301.4 425.7" stroke="#8fa9d8" stroke-width="2.2"/>
<path d="M129.6 413.0L133.8 408.0H142.6V416.79999999999995L138.6 421.0V430.4H129.6Z" fill="#ffffff"/><path d="M130.4 413.79999999999995H138V429.79999999999995H130.4Z" fill="#e3e5eb"/><path d="M130.4 421.4H138" stroke="#fff" stroke-width="1.2"/><path d="M138.6 421.2L142.8 416.79999999999995H152V425.79999999999995L148.2 430.4H138.6Z" fill="#ffffff"/><path d="M139.4 422.0H147.4V429.79999999999995H139.4Z" fill="#e3e5eb"/><path d="M138.6 430.4H131.4Q129.6 430.4 129.6 428.4V413.2L133.8 408.79999999999995Q134.6 408.0 135.8 408.0H141Q142.6 408.0 142.6 409.79999999999995V416.79999999999995" fill="none" stroke="#4a4e58" stroke-width="1.5"/><path d="M138.6 421.2V430.4H147.4L152 425.79999999999995V418.4Q152 416.79999999999995 150.4 416.79999999999995H142.8L138.6 421.2" fill="none" stroke="#4a4e58" stroke-width="1.5" stroke-linejoin="round"/>
<text x="174.2" y="424.9" font-size="16.6" fill="#ffffff" font-weight="bold" textLength="119.2" lengthAdjust="spacingAndGlyphs">Component1:1</text>
<circle cx="323.3" cy="419.6" r="8.9" fill="#fff" stroke="#333" stroke-width="1.5"/><circle cx="323.3" cy="419.6" r="3.4" fill="#222"/>
<path d="M87.8 446.2L100.39999999999999 455L87.8 463.8Z" fill="#dfe0e4" stroke="#333" stroke-width="1.7" stroke-linejoin="round"/>
<path d="M118.4 455Q124.4 447.8 130.4 447.8Q136.4 447.8 142.4 455Q136.4 462.2 130.4 462.2Q124.4 462.2 118.4 455Z" fill="none" stroke="#a9a9a9" stroke-width="1.3"/><circle cx="130.4" cy="455" r="3.6" fill="none" stroke="#a9a9a9" stroke-width="1.2"/><path d="M121.4 446.2L139.0 463.8" stroke="#a9a9a9" stroke-width="1.1"/>
<path d="M156.2 445.8H166.6L167.79999999999998 447.2V448.40000000000003H156.2Z" fill="#9b9b9b"/><path d="M156.2 450.40000000000003H167.6L170.2 447.2H180.2V464.0H156.2Z" fill="#9b9b9b"/>
<text x="201.3" y="460.9" font-size="16.6" fill="#454545" textLength="41.3" lengthAdjust="spacingAndGlyphs">Origin</text>
<defs><linearGradient id="tg85491" x1="0" y1="0" x2="1" y2="1"><stop offset="0.3" stop-color="#c8c8c8"/><stop offset="1" stop-color="#555"/></linearGradient></defs><path d="M86.2 499H101.4V483.4Z" fill="url(#tg85491)" stroke="#2e2e2e" stroke-width="1.6" stroke-linejoin="round"/>
<path d="M118.2 491Q124.4 483.4 130.4 483.4Q136.4 483.4 142.6 491Q136.4 498.6 130.4 498.6Q124.4 498.6 118.2 491Z" fill="#9c9c9c"/><circle cx="130.4" cy="491" r="4.2" fill="none" stroke="#e6e6e6" stroke-width="1.1"/>
<path d="M156.2 481.8H166.6L167.79999999999998 483.2V484.40000000000003H156.2Z" fill="#9b9b9b"/><path d="M156.2 486.40000000000003H167.6L170.2 483.2H180.2V500.0H156.2Z" fill="#9b9b9b"/>
<text x="201.3" y="496.9" font-size="16.6" fill="#454545" textLength="66.7" lengthAdjust="spacingAndGlyphs">Sketches</text>
<path d="M145.3 527Q151.3 519.8 157.3 519.8Q163.3 519.8 169.3 527Q163.3 534.2 157.3 534.2Q151.3 534.2 145.3 527Z" fill="none" stroke="#a9a9a9" stroke-width="1.3"/><circle cx="157.3" cy="527" r="3.6" fill="none" stroke="#a9a9a9" stroke-width="1.2"/><path d="M148.3 518.2L165.9 535.8" stroke="#a9a9a9" stroke-width="1.1"/>
<path d="M184.6 517.5H203.6V528.5M184.6 517.5V535.5H194.6" fill="none" stroke="#5a5a5a" stroke-width="1.3" stroke-dasharray="14 4"/><rect x="183.0" y="515.9" width="3.2" height="3.2" fill="#1e8fea"/><rect x="202.2" y="515.9" width="3.2" height="3.2" fill="#1e8fea"/><rect x="183.0" y="534.1" width="3.2" height="3.2" fill="#1e8fea"/><path d="M195.0 538.3L196.6 534.1L202.79999999999998 527.9L205.6 530.7L199.4 536.9Z" fill="#f8c04e"/><path d="M195.0 538.3L196.2 535.1L198.4 537.3Z" fill="#7a7a7a"/><path d="M202.79999999999998 527.9L204.2 526.5Q205.2 525.7 206.2 526.7L206.79999999999998 527.3Q207.6 528.3 206.79999999999998 529.3L205.6 530.7Z" fill="#f0524f"/>
<text x="228.3" y="532.9" font-size="16.6" fill="#454545" textLength="57.0" lengthAdjust="spacingAndGlyphs">Sketch1</text>
<path d="M87.8 554.2L100.39999999999999 563L87.8 571.8Z" fill="#dfe0e4" stroke="#333" stroke-width="1.7" stroke-linejoin="round"/>
<path d="M118.4 563Q124.4 555.8 130.4 555.8Q136.4 555.8 142.4 563Q136.4 570.2 130.4 570.2Q124.4 570.2 118.4 563Z" fill="none" stroke="#a9a9a9" stroke-width="1.3"/><circle cx="130.4" cy="563" r="3.6" fill="none" stroke="#a9a9a9" stroke-width="1.2"/><path d="M121.4 554.2L139.0 571.8" stroke="#a9a9a9" stroke-width="1.1"/>
<path d="M156.60000000000002 558L161.8 552H177.4Q179.0 552 179.0 553.6V568.4L173.8 574.2H158.4Q156.60000000000002 574.2 156.60000000000002 572.4Z" fill="#f4f5f8"/><path d="M157.8 559.4H172.4V573H157.8Z" fill="#dfe1e8"/><path d="M173.8 558.4L178.20000000000002 553.4V568L173.8 573Z" fill="#e9eaef"/><path d="M156.60000000000002 558L161.8 552H177.4Q179.0 552 179.0 553.6V568.4L173.8 574.2H158.4Q156.60000000000002 574.2 156.60000000000002 572.4Z" fill="none" stroke="#4a4a4a" stroke-width="1.5" stroke-linejoin="round"/>
<text x="201.3" y="568.9" font-size="16.6" fill="#454545" textLength="101.3" lengthAdjust="spacingAndGlyphs">Component2:1</text>
<path d="M87.8 590.2L100.39999999999999 599L87.8 607.8Z" fill="#dfe0e4" stroke="#333" stroke-width="1.7" stroke-linejoin="round"/>
<path d="M118.2 599Q124.4 591.4 130.4 591.4Q136.4 591.4 142.6 599Q136.4 606.6 130.4 606.6Q124.4 606.6 118.2 599Z" fill="#9c9c9c"/><circle cx="130.4" cy="599" r="4.2" fill="none" stroke="#e6e6e6" stroke-width="1.1"/>
<path d="M156.60000000000002 594L161.8 588H177.4Q179.0 588 179.0 589.6V604.4L173.8 610.2H158.4Q156.60000000000002 610.2 156.60000000000002 608.4Z" fill="#f4f5f8"/><path d="M157.8 595.4H172.4V609H157.8Z" fill="#dfe1e8"/><path d="M173.8 594.4L178.20000000000002 589.4V604L173.8 609Z" fill="#e9eaef"/><path d="M156.60000000000002 594L161.8 588H177.4Q179.0 588 179.0 589.6V604.4L173.8 610.2H158.4Q156.60000000000002 610.2 156.60000000000002 608.4Z" fill="none" stroke="#4a4a4a" stroke-width="1.5" stroke-linejoin="round"/>
<text x="201.3" y="604.9" font-size="16.6" fill="#454545" textLength="101.3" lengthAdjust="spacingAndGlyphs">Component3:1</text>
<path d="M151.4 611.4L155.8 606.1999999999999" stroke="#6f8cbc" stroke-width="2.2"/><path d="M160.5 611.4L164.9 606.1999999999999" stroke="#6f8cbc" stroke-width="2.2"/><path d="M169.5 611.4L173.9 606.1999999999999" stroke="#6f8cbc" stroke-width="2.2"/><path d="M178.6 611.4L183.0 606.1999999999999" stroke="#6f8cbc" stroke-width="2.2"/><path d="M187.6 611.4L192.0 606.1999999999999" stroke="#6f8cbc" stroke-width="2.2"/><path d="M196.7 611.4L201.1 606.1999999999999" stroke="#6f8cbc" stroke-width="2.2"/><path d="M205.7 611.4L210.1 606.1999999999999" stroke="#6f8cbc" stroke-width="2.2"/><path d="M214.8 611.4L219.2 606.1999999999999" stroke="#6f8cbc" stroke-width="2.2"/><path d="M223.8 611.4L228.2 606.1999999999999" stroke="#6f8cbc" stroke-width="2.2"/><path d="M232.9 611.4L237.3 606.1999999999999" stroke="#6f8cbc" stroke-width="2.2"/><path d="M241.9 611.4L246.3 606.1999999999999" stroke="#6f8cbc" stroke-width="2.2"/><path d="M251.0 611.4L255.4 606.1999999999999" stroke="#6f8cbc" stroke-width="2.2"/><path d="M260.0 611.4L264.4 606.1999999999999" stroke="#6f8cbc" stroke-width="2.2"/><path d="M269.1 611.4L273.5 606.1999999999999" stroke="#6f8cbc" stroke-width="2.2"/><path d="M278.1 611.4L282.5 606.1999999999999" stroke="#6f8cbc" stroke-width="2.2"/><path d="M287.2 611.4L291.6 606.1999999999999" stroke="#6f8cbc" stroke-width="2.2"/><path d="M296.2 611.4L300.6 606.1999999999999" stroke="#6f8cbc" stroke-width="2.2"/><path d="M305.3 611.4L309.7 606.1999999999999" stroke="#6f8cbc" stroke-width="2.2"/>
<text x="43.8" y="948.0" font-size="16.8" fill="#5e5e5e" textLength="84.9" lengthAdjust="spacingAndGlyphs">COMMENTS</text>
<circle cx="431.2" cy="942.6" r="6.9" fill="#2e2e2e"/><path d="M427.6 942.6H434.8M431.2 939V946.2" stroke="#e0e0e0" stroke-width="1.7"/>
<path d="M449 934.4V950.8" stroke="#999" stroke-width="1.6"/><path d="M452.2 937.2V947.6" stroke="#999" stroke-width="1.2"/><defs><linearGradient id="mcyl" gradientUnits="userSpaceOnUse" x1="478.4" y1="0" x2="573.8" y2="0"><stop offset="0" stop-color="#b6b7b0"/><stop offset="0.05" stop-color="#a9a9a2"/><stop offset="0.16" stop-color="#8b8a82"/><stop offset="0.4" stop-color="#7d7e78"/><stop offset="0.65" stop-color="#70706a"/><stop offset="0.88" stop-color="#5d5c56"/><stop offset="1" stop-color="#54534f"/></linearGradient><linearGradient id="mfil" gradientUnits="userSpaceOnUse" x1="573.8" y1="0" x2="628.4" y2="0"><stop offset="0" stop-color="#7c7d77"/><stop offset="0.5" stop-color="#86867f"/><stop offset="0.82" stop-color="#9c9c95"/><stop offset="1" stop-color="#b4b5ae"/></linearGradient><linearGradient id="mwall" gradientUnits="userSpaceOnUse" x1="728.5" y1="0" x2="853.2" y2="0"><stop offset="0" stop-color="#605d56"/><stop offset="0.5" stop-color="#5e5b54"/><stop offset="0.62" stop-color="#57544e"/><stop offset="0.71" stop-color="#4b4943"/><stop offset="0.745" stop-color="#3a3934"/><stop offset="0.82" stop-color="#363631"/><stop offset="0.86" stop-color="#454440"/><stop offset="1" stop-color="#4a4945"/></linearGradient><linearGradient id="mhole" gradientUnits="userSpaceOnUse" x1="507.5" y1="0" x2="727.5" y2="0"><stop offset="0" stop-color="#45443f"/><stop offset="0.12" stop-color="#4d4c47"/><stop offset="0.35" stop-color="#52514b"/><stop offset="0.52" stop-color="#56524b"/><stop offset="0.7" stop-color="#63625c"/><stop offset="0.88" stop-color="#747570"/><stop offset="0.97" stop-color="#82837e"/><stop offset="1" stop-color="#8c8d88"/></linearGradient><linearGradient id="mholev" gradientUnits="userSpaceOnUse" x1="0" y1="297" x2="0" y2="391"><stop offset="0" stop-color="#000" stop-opacity="0"/><stop offset="1" stop-color="#000" stop-opacity="0.06"/></linearGradient><radialGradient id="mslot" gradientUnits="userSpaceOnUse" cx="699" cy="445" r="150" gradientTransform="translate(699 445) rotate(-43.6) scale(1 0.33) translate(-699 -445)"><stop offset="0" stop-color="#2f2e2a"/><stop offset="0.1" stop-color="#363530"/><stop offset="0.22" stop-color="#43413c" stop-opacity="0.95"/><stop offset="0.45" stop-color="#514e48" stop-opacity="0.7"/><stop offset="0.75" stop-color="#5a5750" stop-opacity="0.35"/><stop offset="1" stop-color="#5f5c55" stop-opacity="0"/></radialGradient><linearGradient id="mslot2" gradientUnits="userSpaceOnUse" x1="690" y1="420" x2="722" y2="452"><stop offset="0" stop-color="#3a3934" stop-opacity="0.0"/><stop offset="1" stop-color="#3a3934" stop-opacity="0"/></linearGradient></defs>
<path d="M478.4 968.4L478.4 342.5L482.4 356.5L486.3 362.2L490.3 366.6L494.3 370.1L498.3 373.1L502.2 375.8L506.2 378.2L510.2 380.4L514.2 382.4L518.1 384.2L522.1 385.9L526.1 387.4L530.1 388.8L534.0 390.2L538.0 391.4L542.0 392.5L546.0 393.6L549.9 394.6L553.9 395.5L557.9 396.3L561.9 397.1L565.8 397.8L569.8 398.5L573.8 399.1L573.8 968.4Z" fill="url(#mcyl)"/>
<path d="M573.4 968.4V398L596.1 408L614.2 422L628.4 440V968.4Z" fill="url(#mfil)"/>
<clipPath id="mwc"><path d="M726 968.4V456H668V436L819 295.4H858L868 305L853.6 320V968.4Z"/></clipPath>
<path d="M726 968.4V456H668V436L819 295.4H858L868 305L853.6 320V968.4Z" fill="url(#mwall)"/>
<g clip-path="url(#mwc)"><rect x="600" y="280" width="260" height="260" fill="url(#mslot)"/></g>
<path d="M628 968.4V440L728.7 460V968.4Z" fill="#666560"/>
<path d="M852.9 968.4V318L881 323.6V968.4Z" fill="#656661"/>
<path d="M880.2 968.4V322L908.8 295V968.4Z" fill="#625f58"/>
<ellipse cx="617.5" cy="344.0" rx="111.2" ry="47.6" fill="url(#mhole)"/>
<ellipse cx="617.5" cy="344.0" rx="111.2" ry="47.6" fill="url(#mholev)"/>
<path d="M726.9 330.0A110.0 46.4 0 0 1 724.5 358.0" fill="none" stroke="#8a8b86" stroke-width="1.6" opacity=".7"/>
<path d="M478.4 344 A139.0 59.6 0 0 1 686 292.1 L732 292.3 Q770 287 796 279.4 Q810 276.6 822 279.4 L908.8 295.9 L880.2 324.8 L853.1 319.3 L864.2 308.4 Q867.4 304.4 862 301.8 Q856 299.6 846 298.2 L825.6 295.6 Q821 295.4 818.4 298.4 L674 436.6 Q670.4 441 675.6 444.4 Q686 450.6 700 450.6 L712 450 Q715.4 449.8 717.2 447.8 L732.1 435.6 L757.4 440.8 L728.5 469.1 L628.4 450.4 Q626 441 621 433 Q613 420 597 410 Q586 403.6 573.8 400 A139.0 59.6 0 0 1 478.4 344 Z M507.5 344.0A110.0 46.4 0 1 0 727.5 344.0A110.0 46.4 0 1 0 507.5 344.0Z" fill="#77736a" fill-rule="evenodd"/>
<path d="M675.8 527.5L693.3 524.4L692.5 513.3L722.2 526.7L698.3 548.9L696.1 538.3L676.7 541.4Z" fill="#2a5f96"/>
<path d="M676.6 528.1L694.1 525L693.3 514.4L721 526.9L698.8 547.5L696.7 537.4L677.4 540.6Z" fill="#ececec"/>
<path d="M679.6 530.4L697 527.4L696.4 518.8L716.2 527.6L700.4 542.4L698.9 534.4L680.2 537.6Z" fill="#2489c0"/>
<rect x="728.4" y="853.2" width="41.2" height="29.2" rx="14.6" fill="#dfdfdf" stroke="#0c0c0c" stroke-width="2.6"/>
<path d="M748.3 853V883" stroke="#0c0c0c" stroke-width="2.6"/>
<path d="M732.5 868L741 862.2V873.9Z" fill="#0c0c0c"/><path d="M764.3 867.7L755 862.2V873.9Z" fill="#0c0c0c"/>
<rect x="851" y="596" width="161" height="33" fill="#ffffff"/><rect x="852" y="597" width="160" height="32" fill="#f1f1f1"/>
<rect x="866" y="597" width="3" height="32" fill="#dcdcdc"/>
<rect x="872.75" y="598.75" width="102.5" height="28" fill="#fff" stroke="#c4c4c4" stroke-width="1.5"/>
<path d="M858.4 600.0l2 1.4" stroke="#d8d8d8" stroke-width="1"/>
<path d="M860.0 603.6l2 1.4" stroke="#d8d8d8" stroke-width="1"/>
<path d="M858.4 607.2l2 1.4" stroke="#d8d8d8" stroke-width="1"/>
<path d="M860.0 610.8l2 1.4" stroke="#d8d8d8" stroke-width="1"/>
<path d="M858.4 614.4l2 1.4" stroke="#d8d8d8" stroke-width="1"/>
<path d="M860.0 618.0l2 1.4" stroke="#d8d8d8" stroke-width="1"/>
<path d="M858.4 621.6l2 1.4" stroke="#d8d8d8" stroke-width="1"/>
<path d="M860.0 625.2l2 1.4" stroke="#d8d8d8" stroke-width="1"/>
<text x="918" y="618.4" font-size="16.6" fill="#4a4a4a">1</text>
<rect x="927.6" y="601.8" width="1.5" height="21.4" fill="#111"/>
<circle cx="994.5" cy="604.2" r="2.1" fill="#8c8c8c"/>
<circle cx="994.5" cy="611.7" r="2.1" fill="#8c8c8c"/>
<circle cx="994.5" cy="619.2" r="2.1" fill="#8c8c8c"/>
<path d="M782.2 221.4L795.2 243.4H769.4Z" fill="#faa21b" stroke="#faa21b" stroke-width="1" stroke-linejoin="round"/>
<rect x="781.2" y="228.2" width="2.2" height="8.2" fill="#fff"/><rect x="781.2" y="238" width="2.2" height="2.4" fill="#fff"/>
<text x="803.2" y="239.2" font-size="17" fill="#3c3c3c" font-weight="bold" textLength="74.6" lengthAdjust="spacingAndGlyphs">Unsaved:</text>
<text x="908.3" y="239.2" font-size="16.6" fill="#4a4a4a" textLength="151.0" lengthAdjust="spacingAndGlyphs">Changes may be lost</text>
<text x="1100.3" y="239.2" font-size="16.6" fill="#1e90d2" textLength="36.9" lengthAdjust="spacingAndGlyphs">Save</text>
<rect x="782" y="926" width="356" height="36" fill="#f1f1f1"/>
<defs><linearGradient id="lens" x1="0" y1="0" x2="0" y2="1"><stop offset="0" stop-color="#c4dde3"/><stop offset="1" stop-color="#f4fafb"/></linearGradient><linearGradient id="scr" x1="0" y1="0" x2="0" y2="1"><stop offset="0" stop-color="#8fb0de"/><stop offset="1" stop-color="#b4cdee"/></linearGradient><linearGradient id="grd" x1="0" y1="0" x2="0" y2="1"><stop offset="0" stop-color="#8c8f96"/><stop offset="1" stop-color="#5e6672"/></linearGradient></defs><ellipse cx="798.2" cy="944.6" rx="11.4" ry="4.2" fill="none" stroke="#3c3c3c" stroke-width="1.4"/><path d="M786.6 945.4Q789 950.4 799 949.6" fill="none" stroke="#f0f0f0" stroke-width="3"/><path d="M795.2 949.8L800 949.6" stroke="#222" stroke-width="1.6"/><path d="M789.2 949.6L795.6 945.6V953.8Z" fill="#111"/><path d="M799.2 931.6L803.2 936.6H800.8V955.4H797.6V936.6H795.2Z" fill="#fff" stroke="#4a505a" stroke-width="1.1" stroke-linejoin="round"/><path d="M787 944.2Q792 940 803 940.6" fill="none" stroke="#3c3c3c" stroke-width="1.4"/><path d="M818 941H827.2L822.6 946.6Z" fill="#333"/><path d="M838.8 939.6L844.8 932.2L845.8 935.8L855 933.2V939.6Z" fill="#9da3af" stroke="#4a505a" stroke-width="1"/><rect x="837.1" y="940.8" width="21.8" height="14.2" fill="#fff" stroke="#4a505a" stroke-width="1.5"/><rect x="841.6" y="944.4" width="13" height="6.4" fill="#a9afc0" stroke="#4a505a" stroke-width="1.2"/><path d="M884.2 956.2Q881.4 952 878.2 947.6Q875.6 944.6 876.2 943.6Q877.6 942.2 880.6 944.6L883.2 947.4L881.6 937.4Q881.2 934.6 882.8 934.4Q884.4 934.2 885 936.8L886.4 943L886.2 934Q886.2 932 888 932Q889.8 932 890 934L890.6 942.6L891.4 934.6Q891.6 932.8 893.2 933Q894.8 933.2 894.8 935.2L894.6 943.6L896.4 938.4Q897 936.6 898.4 937Q899.6 937.4 899.2 939.6L897.2 948.6Q896.4 952.6 894.6 956.2Z" fill="#e6eaf0" stroke="#4a505a" stroke-width="1.3" stroke-linejoin="round"/><path d="M925.6 947.4L932 952.6" stroke="#3a3e48" stroke-width="3.6" stroke-linecap="round"/><circle cx="920.6" cy="942.3" r="6.8" fill="url(#lens)" stroke="#5a626c" stroke-width="1.8"/><path d="M931 935.2H938.4M934.7 931.6V938.8M931 941.4H938.4" stroke="#333" stroke-width="1.4"/><path d="M954 932.4H976.6V955.4H954Z" fill="none" stroke="#444" stroke-width="1.2" stroke-dasharray="3 2.4"/><path d="M968.6 948.6L975.6 954.4" stroke="#2e2e2e" stroke-width="4" stroke-linecap="round"/><circle cx="963" cy="942" r="9.2" fill="url(#lens)" stroke="#4e545c" stroke-width="1.8"/><path d="M985.1 940.8H993.9L989.5 946.6Z" fill="#333"/><rect x="1003.4" y="932.6" width="22.8" height="18" rx="1.6" fill="#f6f6f6" stroke="#6a6a6a" stroke-width="1.5"/><rect x="1006.6" y="935.6" width="16.4" height="12" rx="1.6" fill="url(#scr)" stroke="#2f4f8f" stroke-width="1.5"/><path d="M1011.4 951L1010 954.8H1019.6L1018.2 951Z" fill="#f2f2f2" stroke="#6a6a6a" stroke-width="1.2" stroke-linejoin="round"/><path d="M1029.9 940.8H1038.9L1034.4 946.6Z" fill="#333"/><rect x="1049.8" y="932.6" width="22.8" height="22.8" rx="1.6" fill="url(#grd)" stroke="#5e5e5e" stroke-width="1.2"/><rect x="1051.6" y="934.4" width="2.6" height="2.6" fill="#fff" opacity="1.00"/><rect x="1051.6" y="938.8" width="2.6" height="2.6" fill="#fff" opacity="0.88"/><rect x="1051.6" y="943.2" width="2.6" height="2.6" fill="#fff" opacity="0.76"/><rect x="1051.6" y="947.6" width="2.6" height="2.6" fill="#fff" opacity="0.64"/><rect x="1051.6" y="952.0" width="2.6" height="2.6" fill="#fff" opacity="0.52"/><rect x="1056.0" y="934.4" width="2.6" height="2.6" fill="#fff" opacity="1.00"/><rect x="1056.0" y="938.8" width="2.6" height="2.6" fill="#fff" opacity="0.88"/><rect x="1056.0" y="943.2" width="2.6" height="2.6" fill="#fff" opacity="0.76"/><rect x="1056.0" y="947.6" width="2.6" height="2.6" fill="#fff" opacity="0.64"/><rect x="1056.0" y="952.0" width="2.6" height="2.6" fill="#fff" opacity="0.52"/><rect x="1060.4" y="934.4" width="2.6" height="2.6" fill="#fff" opacity="1.00"/><rect x="1060.4" y="938.8" width="2.6" height="2.6" fill="#fff" opacity="0.88"/><rect x="1060.4" y="943.2" width="2.6" height="2.6" fill="#fff" opacity="0.76"/><rect x="1060.4" y="947.6" width="2.6" height="2.6" fill="#fff" opacity="0.64"/><rect x="1060.4" y="952.0" width="2.6" height="2.6" fill="#fff" opacity="0.52"/><rect x="1064.8" y="934.4" width="2.6" height="2.6" fill="#fff" opacity="1.00"/><rect x="1064.8" y="938.8" width="2.6" height="2.6" fill="#fff" opacity="0.88"/><rect x="1064.8" y="943.2" width="2.6" height="2.6" fill="#fff" opacity="0.76"/><rect x="1064.8" y="947.6" width="2.6" height="2.6" fill="#fff" opacity="0.64"/><rect x="1064.8" y="952.0" width="2.6" height="2.6" fill="#fff" opacity="0.52"/><rect x="1069.2" y="934.4" width="2.6" height="2.6" fill="#fff" opacity="1.00"/><rect x="1069.2" y="938.8" width="2.6" height="2.6" fill="#fff" opacity="0.88"/><rect x="1069.2" y="943.2" width="2.6" height="2.6" fill="#fff" opacity="0.76"/><rect x="1069.2" y="947.6" width="2.6" height="2.6" fill="#fff" opacity="0.64"/><rect x="1069.2" y="952.0" width="2.6" height="2.6" fill="#fff" opacity="0.52"/><path d="M1076.5 940.8H1085.3L1080.9 946.6Z" fill="#333"/><rect x="1096.4" y="934" width="10.2" height="8.6" rx="1.4" fill="#a3bfe8" stroke="#34538f" stroke-width="1.5"/><rect x="1099.4" y="936.6" width="4.2" height="3.4" fill="none" stroke="#7fa3dc" stroke-width="0.9"/><rect x="1107.8" y="934" width="10.2" height="8.6" rx="1.4" fill="#a3bfe8" stroke="#34538f" stroke-width="1.5"/><rect x="1110.8" y="936.6" width="4.2" height="3.4" fill="none" stroke="#7fa3dc" stroke-width="0.9"/><rect x="1096.4" y="944.2" width="10.2" height="8.6" rx="1.4" fill="#a3bfe8" stroke="#34538f" stroke-width="1.5"/><rect x="1099.4" y="946.8000000000001" width="4.2" height="3.4" fill="none" stroke="#7fa3dc" stroke-width="0.9"/><rect x="1107.8" y="944.2" width="10.2" height="8.6" rx="1.4" fill="#a3bfe8" stroke="#34538f" stroke-width="1.5"/><rect x="1110.8" y="946.8000000000001" width="4.2" height="3.4" fill="none" stroke="#7fa3dc" stroke-width="0.9"/><path d="M1123.1 940.8H1132L1127.55 946.6Z" fill="#333"/><defs><filter id="vcb" x="-30%" y="-30%" width="160%" height="160%"><feGaussianBlur stdDeviation="4"/></filter><linearGradient id="vcf" x1="0" y1="0" x2="0" y2="1"><stop offset="0" stop-color="#f0f0f0"/><stop offset="1" stop-color="#e2e2e2"/></linearGradient></defs>
<path d="M1822 306L1866 318L1888 298L1890 312L1866 328L1826 316Z" fill="#8a8a8a" opacity=".42" filter="url(#vcb)"/>
<path d="M1815.5 257.5L1866.4 266.7L1865.2 317.1L1818.4 305.5Z" fill="url(#vcf)"/>
<path d="M1866.4 266.7L1884.7 248.8L1882 295.7L1865.2 317.1Z" fill="#e6e6e6"/>
<path d="M1840.4 243L1884.7 248.8L1866.4 266.7L1815.5 257.5Z" fill="#f1f1f1"/>
<rect x="1857" y="262" width="9" height="13" fill="#dfe3ea" opacity=".7"/>
<path d="M1840.4 243L1884.7 248.8L1866.4 266.7L1815.5 257.5Z" fill="none" stroke="#8a8a8a" stroke-width="1" stroke-dasharray="5 3"/>
<path d="M1815.5 257.5L1818.4 305.5L1865.2 317.1L1882 295.7L1884.7 248.8M1866.4 266.7L1865.2 317.1" fill="none" stroke="#8a8a8a" stroke-width="1" stroke-dasharray="5 3"/>
<g transform="matrix(1 0.24 0 1 1824.6 288.6)"><text x="0" y="0" font-size="14.5" fill="#9fa1a7" font-weight="bold" textLength="32.6" lengthAdjust="spacingAndGlyphs">RIGHT</text></g>
<g transform="matrix(1 -1.05 0 1 1869 291)"><text x="0" y="0" font-size="11" fill="#a4a4a8" textLength="8" lengthAdjust="spacingAndGlyphs">F</text></g>
<path d="M1843 256.6l3.4 1.6l6-4.2" fill="none" stroke="#aaa" stroke-width="1"/>
<path d="M1840.6 236.4V242" stroke="#6e6eff" stroke-width="2.6"/>
<text x="1835.2" y="234.4" font-size="15.5" fill="#8a8aff" font-weight="bold" textLength="8.4" lengthAdjust="spacingAndGlyphs">Z</text>
<path d="M1818 305.8L1813.4 309.6" stroke="#ee7a7a" stroke-width="2"/>
<text x="1805.0" y="319.6" font-size="15.5" fill="#ff9090" font-weight="bold" textLength="7.8" lengthAdjust="spacingAndGlyphs">X</text>
<path d="M1882 295.4Q1887 294 1891 297" fill="none" stroke="#8fe08f" stroke-width="2"/>
<text x="1893.0" y="301.6" font-size="15.5" fill="#96ea96" font-weight="bold" textLength="7.6" lengthAdjust="spacingAndGlyphs">Y</text><path d="M1317.6 355V370" stroke="#777" stroke-width="1.2"/><path d="M1320.6 353.6V371" stroke="#555" stroke-width="1.3"/>
<circle cx="1338.8" cy="362.5" r="6.8" fill="#2e2e2e"/><rect x="1335" y="361.6" width="7.6" height="1.8" fill="#dcdcdc"/>
<text x="1352.4" y="367.9" font-size="16.8" fill="#5c5c5c" textLength="46.8" lengthAdjust="spacingAndGlyphs">FILLET</text>
<path d="M1890.8 359.2V368.4L1898.6 363.8ZM1898.8 359.2V368.4L1906.6 363.8Z" fill="#2e2e2e"/>
<text x="1333.6" y="410.2" font-size="16.6" fill="#454545" textLength="34.4" lengthAdjust="spacingAndGlyphs">Type</text>
<path d="M1848 401.2H1857.2L1852.6 406.8Z" fill="#333"/>
<path d="M1523.1000000000001 397L1527.8000000000002 392.7H1534.4Q1545.0 393.6 1546.0 403V410.6L1541.2 415.2H1523.1000000000001Z" fill="#f7f7f7"/><path d="M1523.8000000000002 397.8H1534.0Q1540.0 398.6 1540.2 405V414.4H1523.8000000000002Z" fill="#dadada"/><path d="M1540.8000000000002 408L1545.4 403.6V410.2L1540.8000000000002 414.6Z" fill="#c9c9c9"/><path d="M1533.6000000000001 392.7H1527.8000000000002L1523.1000000000001 397V415.2H1541.2L1546.0 410.6V404" fill="none" stroke="#6e6e6e" stroke-width="1.5" stroke-linejoin="round"/><path d="M1532.8000000000002 395.8L1536.2 392.2Q1544.8000000000002 394 1546.5 401.7L1542.3000000000002 405.7Q1541.0 398.4 1532.8000000000002 395.8Z" fill="#5aa8e2"/>
<text x="1552.8" y="410.2" font-size="16.6" fill="#454545" textLength="31.0" lengthAdjust="spacingAndGlyphs">Fillet</text>
<text x="1336.8" y="461.0" font-size="16.6" fill="#454545" textLength="57.7" lengthAdjust="spacingAndGlyphs">4 Edges</text>
<path d="M1539.5 448L1544.2 443.7H1550.8Q1561.3999999999999 444.6 1562.3999999999999 454V461.6L1557.6 466.2H1539.5Z" fill="#f7f7f7"/><path d="M1540.2 448.8H1550.3999999999999Q1556.3999999999999 449.6 1556.6 456V465.4H1540.2Z" fill="#dadada"/><path d="M1557.2 459L1561.8 454.6V461.2L1557.2 465.6Z" fill="#c9c9c9"/><path d="M1550.0 443.7H1544.2L1539.5 448V466.2H1557.6L1562.3999999999999 461.6V455" fill="none" stroke="#6e6e6e" stroke-width="1.5" stroke-linejoin="round"/><path d="M1549.2 446.8L1552.6 443.2Q1561.2 445 1562.8999999999999 452.7L1558.7 456.7Q1557.3999999999999 449.4 1549.2 446.8Z" fill="#5aa8e2"/>
<text x="1568.4" y="461.0" font-size="16.6" fill="#454545" textLength="36.6" lengthAdjust="spacingAndGlyphs">1 mm</text>
<path d="M1699.8 446L1703 443.8L1705.8 444.4L1701.6 451.6L1706.4 453.4L1699.8 465.4Z" fill="#f2f2f2" stroke="#3a3a3a" stroke-width="1.1" stroke-linejoin="round"/>
<path d="M1701.4 457.2L1706 454L1699.8 465.4Z" fill="#bdbdbd"/>
<defs><linearGradient id="tang" x1="0" y1="0" x2="1" y2="0"><stop offset="0" stop-color="#b5d3ea"/><stop offset="1" stop-color="#2f79bd"/></linearGradient></defs>
<path d="M1706.2 444.2L1721.6 452.6L1714.2 459.4L1701.8 451.6Z" fill="url(#tang)" stroke="#2b5e95" stroke-width="1"/>
<text x="1730.0" y="461.0" font-size="16.6" fill="#454545" textLength="93.3" lengthAdjust="spacingAndGlyphs">Tangent (G1)</text>
<path d="M1343.8 579.8H1359.2M1351.5 572.2V587.4" stroke="#3c3c3c" stroke-width="2.6"/>
<path d="M1385 574L1396.6 585.4M1396.6 574L1385 585.4" stroke="#3c3c3c" stroke-width="3"/>
<text x="1333.4" y="638.4" font-size="16.6" fill="#454545" textLength="88.4" lengthAdjust="spacingAndGlyphs">Radius Type</text>
<path d="M1848 629.2H1857.2L1852.6 634.8Z" fill="#333"/>
<path d="M1523.1000000000001 625L1527.8000000000002 620.7H1534.4Q1545.0 621.6 1546.0 631V638.6L1541.2 643.2H1523.1000000000001Z" fill="#f7f7f7"/><path d="M1523.8000000000002 625.8H1534.0Q1540.0 626.6 1540.2 633V642.4H1523.8000000000002Z" fill="#dadada"/><path d="M1540.8000000000002 636L1545.4 631.6V638.2L1540.8000000000002 642.6Z" fill="#c9c9c9"/><path d="M1533.6000000000001 620.7H1527.8000000000002L1523.1000000000001 625V643.2H1541.2L1546.0 638.6V632" fill="none" stroke="#6e6e6e" stroke-width="1.5" stroke-linejoin="round"/><path d="M1532.8000000000002 623.8L1536.2 620.2Q1544.8000000000002 622 1546.5 629.7L1542.3000000000002 633.7Q1541.0 626.4 1532.8000000000002 623.8Z" fill="#5aa8e2"/>
<text x="1552.8" y="638.4" font-size="16.6" fill="#454545" textLength="64.2" lengthAdjust="spacingAndGlyphs">Constant</text>
<text x="1333.4" y="683.4" font-size="16.6" fill="#454545" textLength="163.4" lengthAdjust="spacingAndGlyphs">Edges/Faces/Features</text>
<path d="M1528.6 665.2V685.4L1533.2 681.4L1536.8 689L1539.6 687.6L1536.2 680.4H1542.6Z" fill="#e8eef2" stroke="#444" stroke-width="1.2" stroke-linejoin="miter"/>
<text x="1550.4" y="683.4" font-size="16.6" fill="#ffffff" textLength="44.6" lengthAdjust="spacingAndGlyphs">Select</text>
<text x="1333.4" y="728.4" font-size="16.6" fill="#454545" textLength="101.4" lengthAdjust="spacingAndGlyphs">Tangent Chain</text>
<defs><linearGradient id="chk" x1="0" y1="0" x2="0" y2="1"><stop offset="0" stop-color="#c4c4c4"/><stop offset="1" stop-color="#e6e6e6"/></linearGradient></defs>
<rect x="1523.6" y="711.2" width="21.6" height="20.8" rx="4.6" fill="#fafafa"/>
<rect x="1525" y="712.4" width="18.8" height="18.2" rx="3.6" fill="url(#chk)" stroke="#4c4c4c" stroke-width="1.4"/>
<path d="M1528.6 721.8L1532.8 726L1540.4 716.2" fill="none" stroke="#1e1e1e" stroke-width="1.8"/>
<text x="1333.4" y="773.4" font-size="16.6" fill="#454545" textLength="124.6" lengthAdjust="spacingAndGlyphs">Tangency Weight</text>
<text x="1523.4" y="773.4" font-size="16.6" fill="#454545" textLength="30.0" lengthAdjust="spacingAndGlyphs">1.00</text>
<text x="1333.4" y="833.4" font-size="16.6" fill="#454545" textLength="88.4" lengthAdjust="spacingAndGlyphs">Corner Type</text>
<path d="M1848 824.6H1857.2L1852.6 830.1999999999999Z" fill="#333"/>
<path d="M1523.4 824.4L1528.4 819.4M1528.4 816.6H1535.4M1544.2 824V834" fill="none" stroke="#6a6a6a" stroke-width="1.1" stroke-dasharray="3 1.6"/>
<rect x="1523.4" y="825.4" width="11.6" height="13" fill="#d6d6d6" stroke="#6a6a6a" stroke-width="1.2"/>
<path d="M1523.4 824.6Q1523.8000000000002 821.2 1529.4 820.4Q1536.4 820.4 1541.4 816.6Q1545.0 814.8 1546.0 817.4L1545.8000000000002 822.6Q1542.4 823.6 1542.2 827L1541.8000000000002 835.6Q1540.4 839 1536.0 839V826.6Q1535.4 824.6 1533.0 824.6Z" fill="#4aa2e2"/>
<text x="1552.8" y="833.4" font-size="16.6" fill="#454545" textLength="77.2" lengthAdjust="spacingAndGlyphs">Rolling Ball</text>
<circle cx="1336.6" cy="879" r="8" fill="#0a0a0a"/><circle cx="1336.6" cy="874.8" r="1.5" fill="#fff"/><path d="M1334.6 877.6H1337.8V883H1339.2V884.2H1334.2V883H1335.6V878.8H1334.6Z" fill="#fff"/>
<text x="1733.0" y="885.8" font-size="19" fill="#747474" textLength="25.0" lengthAdjust="spacingAndGlyphs">OK</text>
<text x="1821.4" y="885.8" font-size="19" fill="#747474" textLength="57.4" lengthAdjust="spacingAndGlyphs">Cancel</text>
<text x="1825.4" y="950.0" font-size="16.8" fill="#3a3a3a" font-weight="bold" textLength="63.8" lengthAdjust="spacingAndGlyphs">4 Edges</text><rect x="16.2" y="995.8" width="3" height="20.6" fill="#4a4a4a"/><path d="M34.7 996.4V1015.8L19.6 1006.1Z" fill="#4a4a4a"/>
<path d="M67.4 996.8V1015.4L53 1006.1Z" fill="#4a4a4a"/><rect x="69.4" y="1001.4" width="2.6" height="9.6" fill="#4a4a4a"/>
<path d="M91.4 994.8V1017.6L109.2 1006.2Z" fill="#4a4a4a"/>
<rect x="127.2" y="1001.4" width="2.6" height="9.6" fill="#4a4a4a"/><path d="M131.8 996.8V1015.4L146.6 1006.1Z" fill="#4a4a4a"/>
<path d="M166.4 996.4V1015.8L181.4 1006.1Z" fill="#4a4a4a"/><rect x="181.6" y="995.8" width="3" height="20.6" fill="#4a4a4a"/>
<rect x="231.2" y="1028.4" width="289.2" height="2.8" fill="#c8c8c8"/>
<rect x="231.2" y="1021.4" width="2.6" height="9.6" fill="#c8c8c8"/>
<rect x="267.1" y="1021.4" width="2.6" height="9.6" fill="#c8c8c8"/>
<rect x="302.9" y="1021.4" width="2.6" height="9.6" fill="#c8c8c8"/>
<rect x="338.8" y="1021.4" width="2.6" height="9.6" fill="#c8c8c8"/>
<rect x="374.6" y="1021.4" width="2.6" height="9.6" fill="#c8c8c8"/>
<rect x="410.4" y="1021.4" width="2.6" height="9.6" fill="#c8c8c8"/>
<rect x="446.3" y="1021.4" width="2.6" height="9.6" fill="#c8c8c8"/>
<rect x="482.2" y="1021.4" width="2.6" height="9.6" fill="#c8c8c8"/>
<rect x="518.0" y="1021.4" width="2.6" height="9.6" fill="#c8c8c8"/>
<path d="M219.6 985.4L225.2 979.6" stroke="#4a4a4a" stroke-width="2.3" stroke-linecap="round"/><path d="M227.2 985.4L232.8 979.6" stroke="#4a4a4a" stroke-width="2.3" stroke-linecap="round"/><path d="M234.8 985.4L240.4 979.6" stroke="#4a4a4a" stroke-width="2.3" stroke-linecap="round"/>
<defs><linearGradient id="tnc219" x1="0" y1="0" x2="0" y2="1"><stop offset="0" stop-color="#e8e8e8"/><stop offset="1" stop-color="#d4d4d4"/></linearGradient></defs><path d="M219.8 1002.4L225.8 996.0L239.4 996.0L239.4 1009.6L233.8 1015.6L219.8 1015.6Z" fill="#f2f2f2"/><path d="M219.8 1002.4L233.8 1002.4L233.8 1015.6L219.8 1015.6Z" fill="url(#tnc219)"/><path d="M233.8 1002.4L239.4 996.4L239.4 1009.6L233.8 1015.6Z" fill="#c2c2c2"/><path d="M231.2 996H225.79999999999998L219.79999999999998 1002.4V1015.6H233.79999999999998L239.39999999999998 1009.6V1004" fill="none" stroke="#6e6e6e" stroke-width="1.5" stroke-linejoin="round"/><path d="M236.1 992.7L237.2 996.3L240.6 994.5L238.8 997.9L242.4 999.0L238.8 1000.1L240.6 1003.5L237.2 1001.7L236.1 1005.3L235.0 1001.7L231.6 1003.5L233.4 1000.1L229.8 999.0L233.4 997.9L231.6 994.5L235.0 996.3Z" fill="#ffa900" stroke="#f5b84a" stroke-width="0.5"/>
<path d="M258.8 994.6H272.8M256.8 996.6V1010.6M276.2 996.6V1001.6M258.8 1012.6H265.8" fill="none" stroke="#4e4e4e" stroke-width="1.4"/><rect x="255.0" y="992.8000000000001" width="3.4" height="3.4" fill="#1e8fea"/><rect x="274.40000000000003" y="992.8000000000001" width="3.4" height="3.4" fill="#1e8fea"/><rect x="255.0" y="1011.0" width="3.4" height="3.4" fill="#1e8fea"/><path d="M267.2 1015.6L268.8 1011.6L274.8 1005.6L277.8 1008.6L271.8 1014.6Z" fill="#f8c04e"/><path d="M267.2 1015.6L268.40000000000003 1012.6L270.40000000000003 1014.6Z" fill="#7a7a7a"/><path d="M274.8 1005.6L276.2 1004.2Q277.40000000000003 1003.4 278.40000000000003 1004.4L279.0 1005.0Q279.8 1006.0 279.0 1007.2L277.8 1008.6Z" fill="#f0524f"/>
<path d="M291.1 1012.4L305.1 1012.4L309.5 1008.0L309.5 1011.4L305.1 1016.0L291.1 1016.0Z" fill="#b9b9b9"/><path d="M291.1 1011.2L304.7 1011.2L309.5 1006.4L309.5 1008.0L305.1 1012.4L291.1 1012.4Z" fill="#e8eef4"/><path d="M291.1 997.2L295.9 992.5L309.5 992.5L304.7 997.2Z" fill="#88cafc"/><path d="M304.7 997.2L309.5 992.5L309.5 1006.4L304.7 1011.2Z" fill="#4794d1"/><path d="M291.1 997.2L304.7 997.2L304.7 1011.2L291.1 1011.2Z" fill="#68aee4"/><path d="M312.8 995.4V1011.7" stroke="#333" stroke-width="1.4"/><path d="M310.0 997.4L312.8 993L315.6 997.4Z" fill="#333"/>
<path d="M327.1 1012.4L341.1 1012.4L345.5 1008.0L345.5 1011.4L341.1 1016.0L327.1 1016.0Z" fill="#b9b9b9"/><path d="M327.1 1011.2L340.7 1011.2L345.5 1006.4L345.5 1008.0L341.1 1012.4L327.1 1012.4Z" fill="#e8eef4"/><path d="M327.1 997.2L331.9 992.5L345.5 992.5L340.7 997.2Z" fill="#88cafc"/><path d="M340.7 997.2L345.5 992.5L345.5 1006.4L340.7 1011.2Z" fill="#4794d1"/><path d="M327.1 997.2L340.7 997.2L340.7 1011.2L327.1 1011.2Z" fill="#68aee4"/><path d="M348.8 995.4V1011.7" stroke="#333" stroke-width="1.4"/><path d="M346.0 997.4L348.8 993L351.6 997.4Z" fill="#333"/>
<rect x="363.7" y="993.2" width="10.6" height="10.4" rx="3.6" fill="#dcdcdc" stroke="#6a6a6a" stroke-width="1.5"/><path d="M364.90000000000003 1009.4V1012.4H369.7" fill="none" stroke="#2e2e2e" stroke-width="1.4"/><path d="M368.90000000000003 1010L371.90000000000003 1012.4L368.90000000000003 1014.8Z" fill="#2e2e2e"/><path d="M375.5 1008.0L378.5 1004.6L387.5 1004.6L384.5 1008.0Z" fill="#88cafc"/><path d="M384.5 1008.0L387.5 1004.6L387.5 1012.6L384.5 1016.0Z" fill="#4794d1"/><path d="M375.5 1008.0L384.5 1008.0L384.5 1016.0L375.5 1016.0Z" fill="#68aee4"/>
<path d="M399.7 997.4L404.4 993.1H411.0Q421.6 994.0 422.6 1003.4V1011.0L417.8 1015.6H399.7Z" fill="#f7f7f7"/><path d="M400.4 998.1999999999999H410.6Q416.6 999.0 416.8 1005.4V1014.8H400.4Z" fill="#dadada"/><path d="M417.4 1008.4L422.0 1004.0V1010.6L417.4 1015.0Z" fill="#c9c9c9"/><path d="M410.2 993.1H404.4L399.7 997.4V1015.6H417.8L422.6 1011.0V1004.4" fill="none" stroke="#6e6e6e" stroke-width="1.5" stroke-linejoin="round"/><path d="M409.4 996.1999999999999L412.8 992.6Q421.4 994.4 423.1 1002.1L418.9 1006.1Q417.6 998.8 409.4 996.1999999999999Z" fill="#5aa8e2"/>
<path d="M435.7 997.4L440.4 993.1H447.0Q457.6 994.0 458.6 1003.4V1011.0L453.8 1015.6H435.7Z" fill="#f7f7f7"/><path d="M436.4 998.1999999999999H446.6Q452.6 999.0 452.8 1005.4V1014.8H436.4Z" fill="#dadada"/><path d="M453.4 1008.4L458.0 1004.0V1010.6L453.4 1015.0Z" fill="#c9c9c9"/><path d="M446.2 993.1H440.4L435.7 997.4V1015.6H453.8L458.6 1011.0V1004.4" fill="none" stroke="#6e6e6e" stroke-width="1.5" stroke-linejoin="round"/><path d="M445.4 996.1999999999999L448.8 992.6Q457.4 994.4 459.1 1002.1L454.9 1006.1Q453.6 998.8 445.4 996.1999999999999Z" fill="#5aa8e2"/>
<path d="M471.6 985.4L477.2 979.6" stroke="#4a4a4a" stroke-width="2.3" stroke-linecap="round"/><path d="M479.2 985.4L484.8 979.6" stroke="#4a4a4a" stroke-width="2.3" stroke-linecap="round"/><path d="M486.8 985.4L492.4 979.6" stroke="#4a4a4a" stroke-width="2.3" stroke-linecap="round"/>
<defs><linearGradient id="tnc471" x1="0" y1="0" x2="0" y2="1"><stop offset="0" stop-color="#e8e8e8"/><stop offset="1" stop-color="#d4d4d4"/></linearGradient></defs><path d="M471.8 1002.4L477.8 996.0L491.4 996.0L491.4 1009.6L485.8 1015.6L471.8 1015.6Z" fill="#f2f2f2"/><path d="M471.8 1002.4L485.8 1002.4L485.8 1015.6L471.8 1015.6Z" fill="url(#tnc471)"/><path d="M485.8 1002.4L491.4 996.4L491.4 1009.6L485.8 1015.6Z" fill="#c2c2c2"/><path d="M483.2 996H477.8L471.8 1002.4V1015.6H485.8L491.4 1009.6V1004" fill="none" stroke="#6e6e6e" stroke-width="1.5" stroke-linejoin="round"/><path d="M488.1 992.7L489.2 996.3L492.6 994.5L490.8 997.9L494.4 999.0L490.8 1000.1L492.6 1003.5L489.2 1001.7L488.1 1005.3L487.0 1001.7L483.6 1003.5L485.4 1000.1L481.8 999.0L485.4 997.9L483.6 994.5L487.0 996.3Z" fill="#ffa900" stroke="#f5b84a" stroke-width="0.5"/>
<path d="M507.2 985.4L512.8 979.6" stroke="#4a4a4a" stroke-width="2.3" stroke-linecap="round"/><path d="M514.8 985.4L520.4 979.6" stroke="#4a4a4a" stroke-width="2.3" stroke-linecap="round"/><path d="M522.4 985.4L528.0 979.6" stroke="#4a4a4a" stroke-width="2.3" stroke-linecap="round"/>
<path d="M506.9 1012.4L520.9 1012.4L525.3 1008.0L525.3 1011.4L520.9 1016.0L506.9 1016.0Z" fill="#b9b9b9"/><path d="M506.9 1011.2L520.5 1011.2L525.3 1006.4L525.3 1008.0L520.9 1012.4L506.9 1012.4Z" fill="#e8eef4"/><path d="M506.9 997.2L511.7 992.5L525.3 992.5L520.5 997.2Z" fill="#88cafc"/><path d="M520.5 997.2L525.3 992.5L525.3 1006.4L520.5 1011.2Z" fill="#4794d1"/><path d="M506.9 997.2L520.5 997.2L520.5 1011.2L506.9 1011.2Z" fill="#68aee4"/><path d="M528.6 995.4V1011.7" stroke="#333" stroke-width="1.4"/><path d="M525.8000000000001 997.4L528.6 993L531.4 997.4Z" fill="#333"/>
<path d="M528.2 984H546V988.8L538.7 996.4V1031.4H535.1V996.4L528.2 988.8Z" fill="#5c5c5c"/>
<path d="M1886.36 997.90L1886.30 994.02L1890.90 994.02L1890.84 997.90L1892.74 998.69L1895.44 995.90L1898.70 999.16L1895.91 1001.86L1896.70 1003.76L1900.58 1003.70L1900.58 1008.30L1896.70 1008.24L1895.91 1010.14L1898.70 1012.84L1895.44 1016.10L1892.74 1013.31L1890.84 1014.10L1890.90 1017.98L1886.30 1017.98L1886.36 1014.10L1884.46 1013.31L1881.76 1016.10L1878.50 1012.84L1881.29 1010.14L1880.50 1008.24L1876.62 1008.30L1876.62 1003.70L1880.50 1003.76L1881.29 1001.86L1878.50 999.16L1881.76 995.90L1884.46 998.69ZM1893.0 1006A4.4 4.4 0 1 0 1884.1999999999998 1006A4.4 4.4 0 1 0 1893.0 1006Z" fill="#9a9a9a" fill-rule="evenodd"/>
<circle cx="15.8" cy="1062.2" r="7" fill="#2a2a2a"/><path d="M12.2 1062.2H19.4M15.8 1058.6V1065.8" stroke="#e4e4e4" stroke-width="1.7"/>
<text x="37.6" y="1067.0" font-size="16.8" fill="#5e5e5e" textLength="131.9" lengthAdjust="spacingAndGlyphs">TEXT COMMANDS</text>
</svg>
</body>
</html>
